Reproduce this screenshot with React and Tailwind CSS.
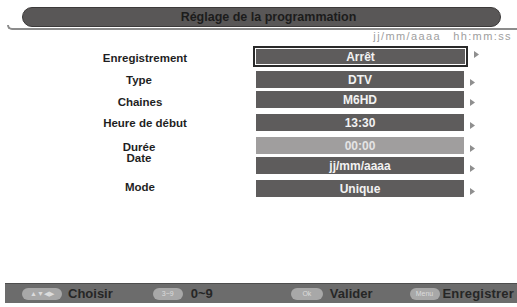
import React from "react";

const font = { fontFamily: '"Liberation Sans", Arial, sans-serif' };

function Arrow() {
  return (
    <svg width="5" height="7" viewBox="0 0 5 7" className="ml-[6px] mt-[5px] shrink-0">
      <polygon points="0,0 5,3.5 0,7" fill="#8f8f8f" />
    </svg>
  );
}

function Box({ children, light, mt }) {
  return (
    <div className={`flex items-center ${mt}`}>
      <div
        className={`w-[208px] h-[17px] flex items-center justify-center text-[12px] font-bold leading-none ${
          light ? "bg-[#a09e9e] text-[#e4e4e4]" : "bg-[#5e5c5c] text-[#f2f2f2]"
        }`}
      >
        {children}
      </div>
      <Arrow />
    </div>
  );
}

function Pill({ children, w }) {
  return (
    <div
      className={`${w} h-[12px] rounded-full bg-[#a8a8a8] text-[#dcdcdc] text-[7px] font-normal leading-none flex items-center justify-center`}
    >
      {children}
    </div>
  );
}

export default function App() {
  return (
    <div className="w-[517px] h-[307px] bg-white flex flex-col overflow-hidden" style={font}>
      {/* Title pill */}
      <div className="mt-[7px] ml-[22px] w-[479px] h-[20px] rounded-full bg-[#595757] border border-[#3c3a3a] flex items-center justify-center pl-[14px]">
        <span className="text-[12.5px] font-bold text-[#1c1c1c] leading-none">Réglage de la programmation</span>
      </div>
      {/* underline with curved left */}
      <div className="ml-[7px] -mt-[2px] h-[5px] border-l-2 border-b-2 border-[#8c8c8c] rounded-bl-[6px]" />
      {/* date hint */}
      <div className="flex justify-end pr-[5px] mt-[1px]">
        <span className="text-[11px] tracking-[1.4px] text-[#9e9e9e] leading-[11px]">jj/mm/aaaa</span>
        <span className="ml-[12px] text-[11px] tracking-[1.4px] text-[#9e9e9e] leading-[11px]">hh:mm:ss</span>
      </div>

      {/* Body */}
      <div className="flex">
        <div className="w-[170px] ml-[60px] flex flex-col items-center text-[11.5px] font-bold text-[#1f1f1f] leading-[12px]">
          <div className="mt-[10px]">Enregistrement</div>
          <div className="mt-[10px] -ml-[12px]">Type</div>
          <div className="mt-[10px] -ml-[10px]">Chaines</div>
          <div className="mt-[9px]">Heure de début</div>
          <div className="mt-[12px] -ml-[12px]">Durée</div>
          <div className="mt-[-1px] -ml-[12px]">Date</div>
          <div className="mt-[17px] -ml-[10px]">Mode</div>
        </div>
        <div className="ml-[23px] flex flex-col">
          <div className="flex items-start mt-[4px]">
            <div className="border-2 border-[#2a2a2a] p-[1px] bg-white">
              <div className="w-[209px] h-[15px] bg-[#5e5c5c] text-[#f2f2f2] text-[12px] font-bold leading-none flex items-center justify-center">
                Arrêt
              </div>
            </div>
            <Arrow />
          </div>
          <div className="ml-[3px]">
            <Box mt="mt-[4px]">DTV</Box>
            <Box mt="mt-[3px]">M6HD</Box>
            <Box mt="mt-[6px]">13:30</Box>
            <Box mt="mt-[6px]" light>00:00</Box>
            <Box mt="mt-[3px]">jj/mm/aaaa</Box>
            <Box mt="mt-[6px]">Unique</Box>
          </div>
        </div>
      </div>

      {/* Footer */}
      <div className="mt-auto mb-[4px] ml-[5px] h-[20px] bg-[#6c6c6c] border-t border-[#4e4e4e] flex items-center text-[13px] font-bold text-[#262626] leading-none whitespace-nowrap">
        <div className="ml-[17px]">
          <Pill w="w-[40px]">▲▼◀▶</Pill>
        </div>
        <span className="ml-[6px]">Choisir</span>
        <div className="ml-[40px]">
          <Pill w="w-[30px]">3~9</Pill>
        </div>
        <span className="ml-[8px]">0~9</span>
        <div className="ml-[78px]">
          <Pill w="w-[32px]">Ok</Pill>
        </div>
        <span className="ml-[7px]">Valider</span>
        <div className="ml-[37px]">
          <Pill w="w-[30px]">Menu</Pill>
        </div>
        <span className="ml-[3px] tracking-[0.2px]">Enregistrer</span>
      </div>
    </div>
  );
}
